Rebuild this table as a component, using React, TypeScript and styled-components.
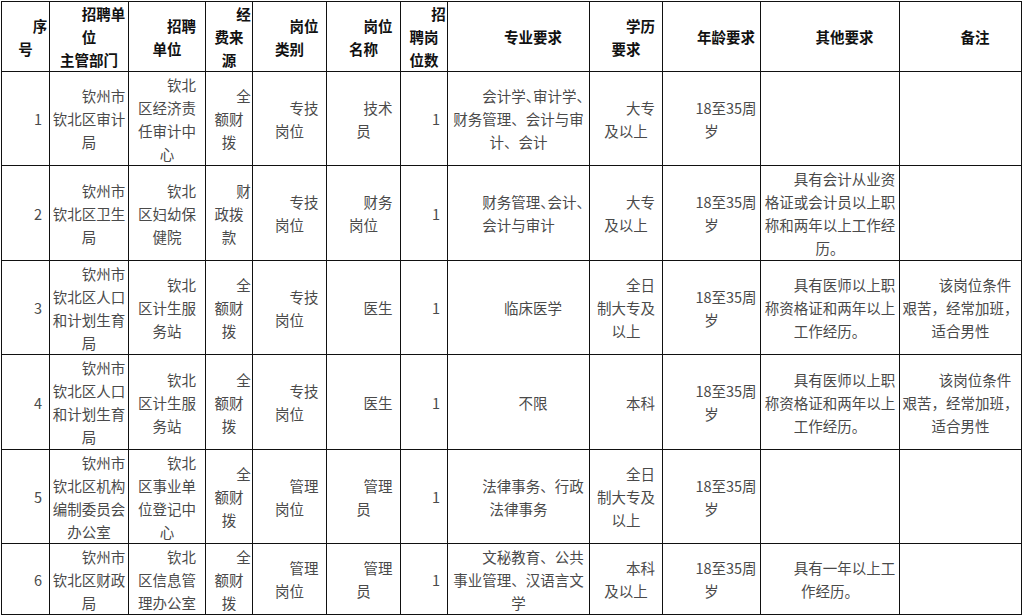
import React, { ReactElement, ReactNode } from 'react';
import styled, { createGlobalStyle } from 'styled-components';

const GlobalStyle = createGlobalStyle`
  html, body {
    margin: 0;
    padding: 0;
    background: #fff;
  }
  body {
    font-family: 'Noto Sans CJK SC', 'Noto Sans', sans-serif;
    -webkit-font-smoothing: antialiased;
  }
`;

const Page = styled.div`
  padding: 1px 0 0 1px;
  width: 1024px;
  height: 616px;
  overflow: hidden;
  box-sizing: border-box;
`;

const Sheet = styled.table`
  width: 1020px;
  table-layout: fixed;
  border-collapse: collapse;
`;

const Col = styled.col<{ $w: number }>`
  width: ${(p) => p.$w}px;
`;

const Row = styled.tr<{ $h: number }>`
  height: ${(p) => p.$h}px;
`;

const HeadCell = styled.th`
  border: 1px solid #111;
  padding: 0 1px;
  font-size: 14.5px;
  line-height: 23px;
  font-weight: 700;
  color: #111;
  text-align: center;
  text-indent: 2em;
  vertical-align: middle;
  white-space: nowrap;
`;

const Cell = styled.td<{ $num?: boolean }>`
  border: 1px solid #111;
  padding: ${(p) => (p.$num ? '0 7px 0 0' : '0 1px')};
  font-size: 14.5px;
  line-height: 23px;
  font-weight: 400;
  color: #4a4a4a;
  text-align: ${(p) => (p.$num ? 'right' : 'center')};
  text-indent: ${(p) => (p.$num ? '0' : '2em')};
  vertical-align: middle;
  white-space: nowrap;
`;

const Half = styled.span`
  letter-spacing: -0.5em;
`;

type Lines = ReactNode[];

const widths = [48, 79, 77, 47, 74, 74, 47, 142, 73, 98, 139, 122];
const heights = [94, 95, 94, 95, 94, 71];
const numberCols = [0, 6];

const head: Lines[] = [
  ['序', '号'],
  ['招聘单', '位', '主管部门'],
  ['招聘', '单位'],
  ['经', '费来', '源'],
  ['岗位', '类别'],
  ['岗位', '名称'],
  ['招', '聘岗', '位数'],
  ['专业要求'],
  ['学历', '要求'],
  ['年龄要求'],
  ['其他要求'],
  ['备注'],
];

const age = ['18至35周', '岁'];
const full = ['全', '额财', '拨'];
const doctorNote = ['具有医师以上职', '称资格证和两年以上', '工作经历。'];
const hardNote = ['该岗位条件', '艰苦，经常加班，', '适合男性'];
const birthBureau = ['钦州市', '钦北区人口', '和计划生育', '局'];

const rows: Lines[][] = [
  [
    ['1'],
    ['钦州市', '钦北区审计', '局'],
    ['钦北', '区经济责', '任审计中', '心'],
    full,
    ['专技', '岗位'],
    ['技术', '员'],
    ['1'],
    [
      <>
        会计学<Half>、</Half>审计学<Half>、</Half>
      </>,
      '财务管理、会计与审',
      '计、会计',
    ],
    ['大专', '及以上'],
    age,
    [],
    [],
  ],
  [
    ['2'],
    ['钦州市', '钦北区卫生', '局'],
    ['钦北', '区妇幼保', '健院'],
    ['财', '政拨', '款'],
    ['专技', '岗位'],
    ['财务', '岗位'],
    ['1'],
    [
      <>
        财务管理<Half>、</Half>会计<Half>、</Half>
      </>,
      '会计与审计',
    ],
    ['大专', '及以上'],
    age,
    ['具有会计从业资', '格证或会计员以上职', '称和两年以上工作经', '历。'],
    [],
  ],
  [
    ['3'],
    birthBureau,
    ['钦北', '区计生服', '务站'],
    full,
    ['专技', '岗位'],
    ['医生'],
    ['1'],
    ['临床医学'],
    ['全日', '制大专及', '以上'],
    age,
    doctorNote,
    hardNote,
  ],
  [
    ['4'],
    birthBureau,
    ['钦北', '区计生服', '务站'],
    full,
    ['专技', '岗位'],
    ['医生'],
    ['1'],
    ['不限'],
    ['本科'],
    age,
    doctorNote,
    hardNote,
  ],
  [
    ['5'],
    ['钦州市', '钦北区机构', '编制委员会', '办公室'],
    ['钦北', '区事业单', '位登记中', '心'],
    full,
    ['管理', '岗位'],
    ['管理', '员'],
    ['1'],
    ['法律事务、行政', '法律事务'],
    ['全日', '制大专及', '以上'],
    age,
    [],
    [],
  ],
  [
    ['6'],
    ['钦州市', '钦北区财政', '局'],
    ['钦北', '区信息管', '理办公室'],
    full,
    ['管理', '岗位'],
    ['管理', '员'],
    ['1'],
    ['文秘教育、公共', '事业管理、汉语言文', '学'],
    ['本科', '及以上'],
    age,
    ['具有一年以上工', '作经历。'],
    [],
  ],
];

function renderLines(lines: Lines): ReactNode {
  return lines.map((line, i) => (
    <React.Fragment key={i}>
      {i > 0 && <br />}
      {line}
    </React.Fragment>
  ));
}

function App(): ReactElement {
  return (
    <Page>
      <GlobalStyle />
      <Sheet>
        <colgroup>
          {widths.map((w, i) => (
            <Col key={i} $w={w} />
          ))}
        </colgroup>
        <thead>
          <Row $h={70}>
            {head.map((lines, i) => (
              <HeadCell key={i}>{renderLines(lines)}</HeadCell>
            ))}
          </Row>
        </thead>
        <tbody>
          {rows.map((row, r) => (
            <Row key={r} $h={heights[r]}>
              {row.map((lines, c) => (
                <Cell key={c} $num={numberCols.includes(c)}>
                  {renderLines(lines)}
                </Cell>
              ))}
            </Row>
          ))}
        </tbody>
      </Sheet>
    </Page>
  );
}

export default App;
